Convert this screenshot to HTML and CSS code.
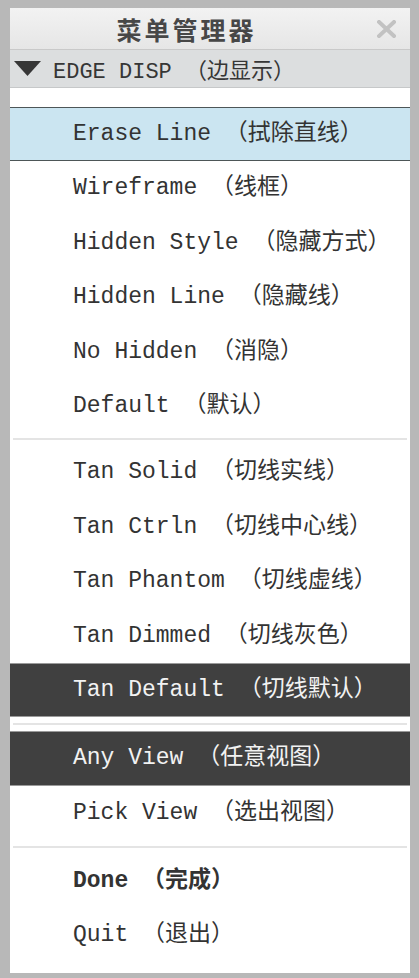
FILE: index.html
```html
<!DOCTYPE html>
<html lang="zh">
<head>
    <meta charset="UTF-8">
    <meta name="viewport" content="width=device-width, initial-scale=1.0">
    <title>菜单管理器</title>
    <link rel="stylesheet" href="styles.css">
</head>
<body>
    <div class="window">
        <div class="titlebar">
            <span class="title">菜单管理器</span>
            <span class="close">
                <svg width="19" height="18" viewBox="0 0 19 18">
                    <path d="M2 2 L17 16 M17 2 L2 16" stroke="#c2c2c2" stroke-width="4" stroke-linecap="square"/>
                </svg>
            </span>
        </div>

        <div class="menu-head">
            <svg class="caret" width="27" height="15" viewBox="0 0 27 15">
                <path d="M0 0 H27 L13.5 15 Z" fill="#363636"/>
            </svg>
            <span>EDGE DISP （边显示）</span>
        </div>

        <div class="menu-body">
            <ul class="group">
                <li class="item selected">Erase Line （拭除直线）</li>
                <li class="item">Wireframe （线框）</li>
                <li class="item">Hidden Style （隐藏方式）</li>
                <li class="item">Hidden Line （隐藏线）</li>
                <li class="item">No Hidden （消隐）</li>
                <li class="item">Default （默认）</li>
            </ul>
            <div class="sep"></div>
            <ul class="group">
                <li class="item">Tan Solid （切线实线）</li>
                <li class="item">Tan Ctrln （切线中心线）</li>
                <li class="item">Tan Phantom （切线虚线）</li>
                <li class="item">Tan Dimmed （切线灰色）</li>
                <li class="item active">Tan Default （切线默认）</li>
            </ul>
            <div class="sep wide"></div>
            <ul class="group">
                <li class="item active">Any View （任意视图）</li>
                <li class="item">Pick View （选出视图）</li>
            </ul>
            <div class="sep wide"></div>
            <ul class="group">
                <li class="item bold">Done （完成）</li>
                <li class="item">Quit （退出）</li>
            </ul>
        </div>
    </div>
</body>
</html>
```

FILE: styles.css
```css
body {
    margin: 0;
    padding: 0;
    background: #bdbdbd;
}

.window {
    width: 419px;
    height: 978px;
    box-sizing: border-box;
    border-style: solid;
    border-color: #b8b8b8;
    border-width: 8px 9px 5px 10px;
    background: #ffffff;
    display: flex;
    flex-direction: column;
    font-family: "Liberation Mono", "Noto Sans CJK SC", monospace;
}

/* Title bar */
.titlebar {
    height: 42px;
    box-sizing: border-box;
    display: flex;
    align-items: center;
    background: linear-gradient(#f2f2f2, #e6e6e6);
    border-bottom: 1px solid #c9c9c9;
}

.titlebar .title {
    flex: 1;
    text-align: center;
    font-family: "Noto Sans CJK SC", sans-serif;
    font-size: 25px;
    font-weight: bold;
    letter-spacing: 3px;
    color: #474747;
}

.titlebar .close {
    width: 47px;
    display: flex;
    justify-content: flex-start;
    padding-left: 14px;
    box-sizing: border-box;
}

.titlebar .close svg {
    display: block;
}

/* Menu header */
.menu-head {
    height: 38px;
    box-sizing: border-box;
    display: flex;
    align-items: center;
    padding-left: 4px;
    background: #dcdedf;
    border-bottom: 1px solid #c6c8c9;
    font-size: 22px;
    color: #363636;
}

.menu-head .caret {
    margin-right: 12px;
}

/* Menu list */
.menu-body {
    flex: 1;
    padding-top: 19px;
}

.group {
    list-style: none;
    margin: 0;
    padding: 0;
}

.item {
    height: 54.4px;
    line-height: 54px;
    box-sizing: border-box;
    padding-left: 63px;
    font-size: 23px;
    color: #333333;
    white-space: nowrap;
}

.item.selected {
    background: #cbe5f1;
    border-top: 1px solid #4d5657;
    border-bottom: 1px solid #4d5657;
    line-height: 52px;
}

.item.active {
    background: #404040;
    color: #f2f2f2;
    border-top: 1px solid #9a9a9a;
    border-bottom: 1px solid #9a9a9a;
    line-height: 52px;
}

.item.bold {
    font-weight: bold;
}

.sep {
    height: 2px;
    margin: 5px 3px;
    background: #e4e4e4;
}

.sep.wide {
    margin: 6px 3px;
}
```
